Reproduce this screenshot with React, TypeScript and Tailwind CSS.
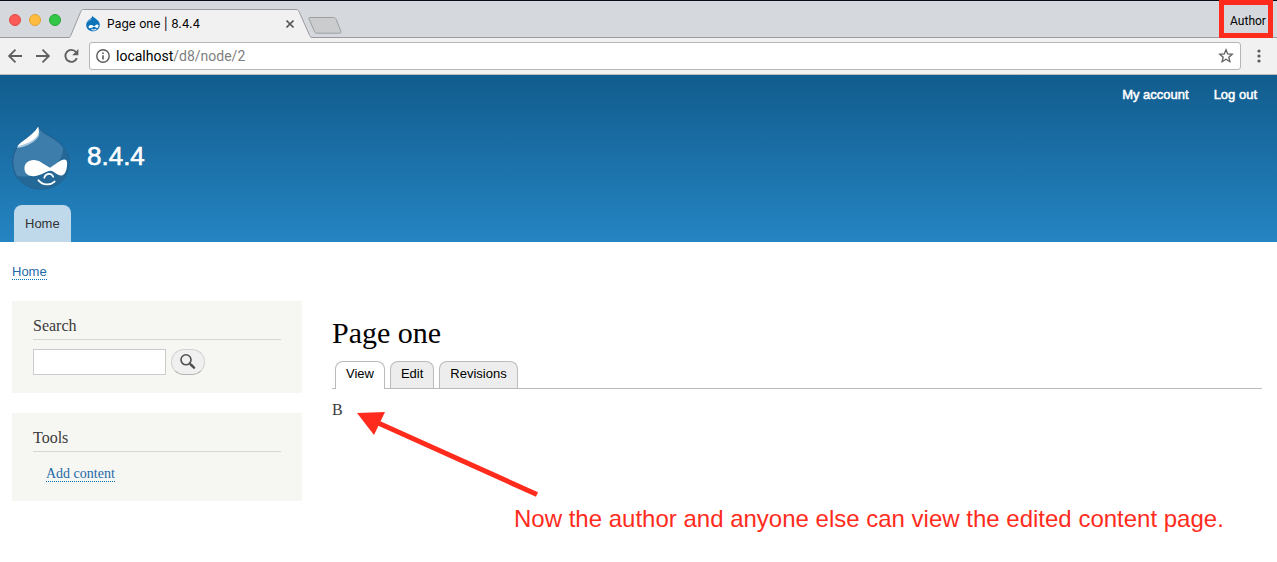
import React from "react";

const sans = "font-['Liberation_Sans',Arial,sans-serif]";
const serif = "font-['Liberation_Serif',Georgia,serif]";
const chrome = "font-[Roboto,'Liberation_Sans',sans-serif]";

function Favicon() {
  return (
    <svg viewBox="0 0 16 17" className="h-[17px] w-4 shrink-0" aria-hidden="true">
      <path d="M7.4 0.6C8.2 2.4 9.8 3.1 11.4 4.3C13.5 5.8 14.8 7.7 14.8 10C14.8 13.7 11.8 16.3 8 16.3C4.1 16.3 1.2 13.7 1.2 10C1.2 7.2 3 5.4 5 4.1C6.4 3.2 7.3 2.3 7.4 0.6Z" fill="#0f73ba" />
      <path d="M1.5 8C3 6.2 5.2 5.3 7 4C5.3 4.1 2.4 5.6 1.5 8Z" fill="#8dc2e6" />
      <path d="M3.6 12C3.6 10 5.7 9.5 7.3 10.3L9 11.2L11 9.9C12.6 9 13.9 9.8 13.5 11.5C13 13.2 11.8 13.2 10.4 12.2C9 11.3 8.5 12.1 7 12.8C5.4 13.6 3.6 13.4 3.6 12Z" fill="#fff" />
      <path d="M6.5 14.4Q9 15.8 11.3 14.3" fill="none" stroke="#fff" strokeWidth="1" />
    </svg>
  );
}

function SiteLogo() {
  return (
    <svg viewBox="0 0 58 65" className="h-[65px] w-[58px]" aria-hidden="true">
      <path d="M26.3 0.6C28 6.8 34 8.8 40.5 12.8C50.5 19 57 27 57 37.5C57 53 45 64 29 64C13 64 0.8 53 0.8 37C0.8 26 6.5 18.5 14 13.8C20 10 26 6.5 26.3 0.6Z" fill="#3d7dab" stroke="#215b86" strokeWidth="1" />
      <path d="M50.7 20.5C55 25.5 56.6 31 56.6 37.5C56.6 53 45 63.6 29 63.6C17 63.6 7 58 2.8 50C9 52.5 17 52 27 49C41 45 53 34 50.7 20.5Z" fill="#236896" />
      <path d="M5 23C8.5 16.5 20.5 12.5 26 4C29 9.5 26.5 13.5 20 17.8C14.5 21.3 9.5 22.4 5 23Z" fill="#a9c9df" />
      <path d="M5 22.3C8 16 20 12 26.2 1.5C28 8.5 25.5 12 19.5 16C14.5 19.3 8 20 5 22.3Z" fill="#fff" />
      <path d="M12.5 44.3C11.5 35.8 22 32 30 38L38 42.8L46 37.2C50 34 54.5 33 55 37C55.5 42 54 49.5 50 50.5C45.5 51.3 42 45.8 38.5 45.8C34.5 45.8 29.5 50.7 22 51.2C17 51.4 13 49.4 12.5 44.3Z" fill="#fff" />
      <path d="M32.2 52.8C33.5 48.1 39.5 47.4 41.2 51.8" fill="none" stroke="#fff" strokeWidth="1.7" strokeLinecap="round" />
      <path d="M26.5 55.3C31 60.6 38.5 60.4 42.6 56.6" fill="none" stroke="#fff" strokeWidth="1.9" strokeLinecap="round" />
    </svg>
  );
}

function BrowserChrome() {
  return (
    <div className={`${chrome} bg-[#f1f1f1]`}>
      <div className="flex h-[38px] items-end border-t border-[#090b18] bg-[#d5d9de] shadow-[inset_0_-1px_0_#9b9b9b]">
        <div className="flex w-[69px] shrink-0 items-center gap-2 self-center pl-[9px]">
          <button aria-label="Close window" className="size-3 rounded-full border border-[#e14942] bg-[#fc5b57]" />
          <button aria-label="Minimise window" className="size-3 rounded-full border border-[#e1a32e] bg-[#fdbc40]" />
          <button aria-label="Zoom window" className="size-3 rounded-full border border-[#24a938] bg-[#33c748]" />
        </div>
        <div className="relative flex h-[29px] w-[243px] shrink-0 items-center pl-4 pr-4">
          <svg viewBox="0 0 243 29" className="absolute inset-0 h-full w-full" aria-hidden="true">
            <path d="M0 28.5C1.4 28.2 1.6 27 2.4 25L11.8 2.5C12.5 1 13 0.5 14.5 0.5H227C228.6 0.5 229.2 1 230 2.5L240 25C241 27.3 241.3 28.2 243 28.5V29H0Z" fill="#f1f1f1" />
            <path d="M0 28.5C1.4 28.2 1.6 27 2.4 25L11.8 2.5C12.5 1 13 0.5 14.5 0.5H227C228.6 0.5 229.2 1 230 2.5L240 25C241 27.3 241.3 28.2 243 28.5" fill="none" stroke="#999b9e" />
          </svg>
          <div className="relative flex flex-1 items-center">
            <Favicon />
            <span className="ml-1.5 flex-1 font-[Inter,sans-serif] text-xs text-black">Page one | 8.4.4</span>
            <button aria-label="Close tab" className="p-0.5">
              <svg viewBox="0 0 8 8" className="size-2" aria-hidden="true">
                <path d="M0.5 0.5L7.5 7.5M7.5 0.5L0.5 7.5" stroke="#5a5a5a" strokeWidth="1.6" />
              </svg>
            </button>
          </div>
        </div>
        <button aria-label="New tab" className="-ml-1 mb-1">
          <svg viewBox="0 0 34 17" className="h-[17px] w-[34px]" aria-hidden="true">
            <path d="M2 0.5H25.5C27 0.5 27.6 1 28.2 2.3L32.8 14C33.4 15.6 33 16.2 31.6 16.2H9C7.6 16.2 7 15.6 6.4 14.2L1 2C0.5 1 1 0.5 2 0.5Z" fill="#cacccd" stroke="#9d9fa1" />
          </svg>
        </button>
        <button className="ml-auto mr-1 flex h-full w-[54px] shrink-0 items-center justify-center pl-1 pt-0.5 text-xs text-black">Author</button>
      </div>
      <div className="flex h-[37px] items-center border-b border-[#bdbdbd] pl-[7px] pr-4">
        <div className="flex shrink-0 items-center gap-3 text-[#5f5f5f]">
          <button aria-label="Back">
            <svg viewBox="0 0 16 16" className="size-4" fill="none" stroke="currentColor" strokeWidth="1.8" aria-hidden="true">
              <path d="M15 8H2M8.5 1.6L2.1 8L8.5 14.4" />
            </svg>
          </button>
          <button aria-label="Forward">
            <svg viewBox="0 0 16 16" className="size-4" fill="none" stroke="currentColor" strokeWidth="1.8" aria-hidden="true">
              <path d="M1 8H14M7.5 1.6L13.9 8L7.5 14.4" />
            </svg>
          </button>
          <button aria-label="Reload">
            <svg viewBox="0 0 16 16" className="size-4" fill="none" stroke="currentColor" strokeWidth="1.9" aria-hidden="true">
              <path d="M13 4A6 6 0 1 0 13.9 10.2" />
              <path d="M15.4 1V7.2H9.2Z" fill="currentColor" stroke="none" />
            </svg>
          </button>
        </div>
        <div className="ml-2.5 flex h-7 flex-1 items-center rounded-[3px] border border-[#b5b5b5] bg-white px-1.5">
          <svg viewBox="0 0 14 14" className="size-3.5 shrink-0" fill="none" stroke="#5a5a5a" strokeWidth="1.4" aria-hidden="true">
            <circle cx="7" cy="7" r="6.2" />
            <path d="M7 6.2V10.6M7 3.4V5" strokeWidth="1.6" />
          </svg>
          <div className="ml-1.5 flex-1 text-sm text-[#7f7f7f]" role="textbox" aria-label="Address">
            <span className="text-black">localhost</span>/d8/node/2
          </div>
          <button aria-label="Bookmark this page">
            <svg viewBox="0 0 16 16" className="size-4" fill="none" stroke="#5f5f5f" strokeWidth="1.3" aria-hidden="true">
              <path d="M8 1.8L9.7 6L14.2 6.3L10.8 9.2L11.9 13.7L8 11.2L4.1 13.7L5.2 9.2L1.8 6.3L6.3 6Z" />
            </svg>
          </button>
        </div>
        <button aria-label="Menu" className="ml-4">
          <svg viewBox="0 0 4 14" className="h-3.5 w-1" fill="#5a5a5a" aria-hidden="true">
            <circle cx="2" cy="2" r="1.6" />
            <circle cx="2" cy="7" r="1.6" />
            <circle cx="2" cy="12" r="1.6" />
          </svg>
        </button>
      </div>
    </div>
  );
}

function SiteHeader() {
  return (
    <header className={`${sans} bg-linear-to-b from-[#115c8e] to-[#2585c2]`}>
      <nav aria-label="User account" className="flex justify-end gap-[25px] px-5 pt-2.5 text-[13px] leading-5 text-white [-webkit-text-stroke:0.5px_white]">
        <a href="#account">My account</a>
        <a href="#logout">Log out</a>
      </nav>
      <div className="flex items-start gap-[17px] pl-3 pt-5">
        <a href="#home" aria-label="Site home"><SiteLogo /></a>
        <a href="#home" className="pt-4 text-[26px] leading-[30px] text-white [-webkit-text-stroke:0.6px_white]">8.4.4</a>
      </div>
      <nav aria-label="Main" className="flex pl-3.5 pt-[15px]">
        <a href="#home" className="rounded-t-lg bg-[#bfd9eb] px-[11px] py-2 text-[13px] leading-[21px] text-[#333]">Home</a>
      </nav>
    </header>
  );
}

function SidebarBlock({ title, children }: { title: string; children: React.ReactNode }) {
  return (
    <section className="bg-[#f6f6f2] px-[21px] pt-[15px]">
      <h2 className="border-b border-[#d6d6d6] pb-[3px] text-base leading-5 text-[#3b3b3b]">{title}</h2>
      {children}
    </section>
  );
}

const tab = "rounded-t-lg border border-b-0 border-[#bbb] px-2.5 pt-px pb-1 leading-[21px] text-black";

export default function App() {
  return (
    <div className="relative min-h-screen bg-white">
      <BrowserChrome />
      <SiteHeader />

      <nav aria-label="Breadcrumb" className={`${sans} flex px-3 pt-[22px] text-[13px]`}>
        <a href="#home" className="border-b border-dotted border-[#0071b3] leading-[15px] text-[#1f69a8]">Home</a>
      </nav>

      <div className="flex items-start gap-[30px] pl-3 pr-[15px] pt-[21px]">
        <aside className={`${serif} flex w-[290px] shrink-0 flex-col gap-5`}>
          <SidebarBlock title="Search">
            <form className="flex items-center gap-[5px] pb-[18px] pt-[9px]" onSubmit={(e) => e.preventDefault()}>
              <input type="search" aria-label="Search" className="h-[26px] w-[133px] border border-[#ccc] bg-white px-1 text-sm outline-none" />
              <button aria-label="Submit search" className="flex h-[26px] w-[34px] items-center justify-center rounded-full border border-[#d2d2d2] border-b-[#b4b4b4] bg-[#f0f0f0]">
                <svg viewBox="0 0 16 16" className="size-4" fill="none" stroke="#505050" aria-hidden="true">
                  <circle cx="6" cy="5.8" r="5" strokeWidth="1.6" />
                  <path d="M9.6 9.4L11.2 11" strokeWidth="1.6" />
                  <path d="M11 10.8L14 13.6" strokeWidth="2.6" strokeLinecap="round" />
                </svg>
              </button>
            </form>
          </SidebarBlock>
          <SidebarBlock title="Tools">
            <ul className="flex pb-[19px] pl-[13px] pt-[14px]">
              <li className="flex">
                <a href="#add" className="border-b border-dotted border-[#0071b3] text-sm leading-[15px] text-[#1f69a8]">Add content</a>
              </li>
            </ul>
          </SidebarBlock>
        </aside>

        <main className="min-w-0 flex-1 pt-4">
          <h1 className={`${serif} text-[30px] leading-8 text-black`}>Page one</h1>
          <nav aria-label="Page tabs" className={`${sans} mt-3 flex gap-[5px] border-b border-[#bbb] pl-[3px] text-[13px]`}>
            <a href="#view" className={`${tab} -mb-px bg-white`}>View</a>
            <a href="#edit" className={`${tab} bg-[#ededed]`}>Edit</a>
            <a href="#revisions" className={`${tab} bg-[#ededed]`}>Revisions</a>
          </nav>
          <p className={`${serif} pt-[11px] text-base leading-5 text-[#3b3b3b]`}>B</p>
        </main>
      </div>

      <div className="pointer-events-none absolute right-1 top-0 h-[38px] w-[54px] border-[5px] border-[#ff2c1d]" />
      <svg viewBox="0 0 184 88" className="pointer-events-none absolute left-[356px] top-[410px] h-[88px] w-[184px]" aria-hidden="true">
        <path d="M20 12L181 84.5" stroke="#ff2c1d" strokeWidth="5" />
        <path d="M1 3L29 2L18 25Z" fill="#ff2c1d" />
      </svg>
      <p className={`${sans} absolute left-[514px] top-[505px] whitespace-nowrap text-2xl leading-7 text-[#ff2c1d]`}>
        Now the author and anyone else can view the edited content page.
      </p>
    </div>
  );
}
